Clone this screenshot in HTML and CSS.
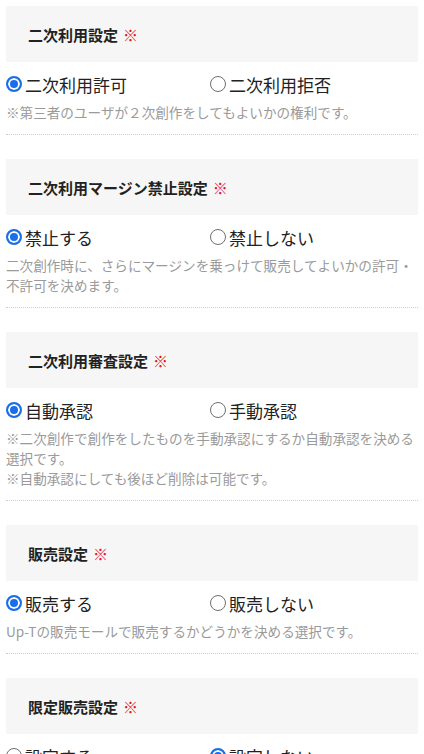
FILE: index.html
```html
<!DOCTYPE html>
<html lang="ja">
<head>
    <meta charset="UTF-8">
    <meta name="viewport" content="width=device-width, initial-scale=1.0">
    <title>二次利用設定</title>
    <link rel="stylesheet" href="styles.css">
</head>
<body>
    <div class="settings">
        <div class="setting">
            <div class="setting-title">二次利用設定<span class="required">※</span></div>
            <div class="options">
                <label class="option"><input type="radio" name="niji" checked>二次利用許可</label>
                <label class="option"><input type="radio" name="niji">二次利用拒否</label>
            </div>
            <p class="note">※第三者のユーザが２次創作をしてもよいかの権利です。</p>
        </div>

        <div class="setting">
            <div class="setting-title">二次利用マージン禁止設定<span class="required">※</span></div>
            <div class="options">
                <label class="option"><input type="radio" name="margin" checked>禁止する</label>
                <label class="option"><input type="radio" name="margin">禁止しない</label>
            </div>
            <p class="note">二次創作時に、さらにマージンを乗っけて販売してよいかの許可・不許可を決めます。</p>
        </div>

        <div class="setting">
            <div class="setting-title">二次利用審査設定<span class="required">※</span></div>
            <div class="options">
                <label class="option"><input type="radio" name="shinsa" checked>自動承認</label>
                <label class="option"><input type="radio" name="shinsa">手動承認</label>
            </div>
            <p class="note">※二次創作で創作をしたものを手動承認にするか自動承認を決める選択です。<br>※自動承認にしても後ほど削除は可能です。</p>
        </div>

        <div class="setting">
            <div class="setting-title">販売設定<span class="required">※</span></div>
            <div class="options">
                <label class="option"><input type="radio" name="hanbai" checked>販売する</label>
                <label class="option"><input type="radio" name="hanbai">販売しない</label>
            </div>
            <p class="note">Up-Tの販売モールで販売するかどうかを決める選択です。</p>
        </div>

        <div class="setting">
            <div class="setting-title">限定販売設定<span class="required">※</span></div>
            <div class="options">
                <label class="option"><input type="radio" name="gentei">設定する</label>
                <label class="option"><input type="radio" name="gentei" checked>設定しない</label>
            </div>
            <p class="note">限定販売の設定をするかどうかを決める選択です。</p>
        </div>
    </div>
</body>
</html>
```

FILE: styles.css
```css
body {
    margin: 0;
    background-color: #fff;
    color: #222;
    font-family: "Noto Sans CJK JP", "Noto Sans", sans-serif;
}
.settings {
    padding: 6px;
}
.setting {
    padding-bottom: 12px;
    margin-bottom: 24px;
    border-bottom: 1px dotted #cfcfcf;
}
.setting-title {
    height: 56px;
    padding: 0 22px;
    display: flex;
    align-items: center;
    background-color: #f6f6f6;
    font-size: 15px;
    font-weight: bold;
}
.required {
    color: #e3141f;
    margin-left: 5px;
    font-weight: normal;
}
.options {
    display: grid;
    grid-template-columns: 204px 1fr;
    margin-top: 10px;
}
.option {
    display: flex;
    align-items: center;
    height: 24px;
    font-size: 17px;
    cursor: pointer;
}
.option input {
    appearance: none;
    -webkit-appearance: none;
    box-sizing: border-box;
    width: 16px;
    height: 16px;
    margin: 0 3px 0 0;
    border: 1px solid #6f6f6f;
    border-radius: 50%;
    background-color: #fff;
    flex-shrink: 0;
}
.option input:checked {
    border: 2px solid #1a6ee8;
    background-color: #1a6ee8;
    box-shadow: inset 0 0 0 2px #fff;
}
.note {
    margin: 6px 0 0;
    font-size: 13.6px;
    line-height: 20px;
    color: #9a9a9a;
}
```
